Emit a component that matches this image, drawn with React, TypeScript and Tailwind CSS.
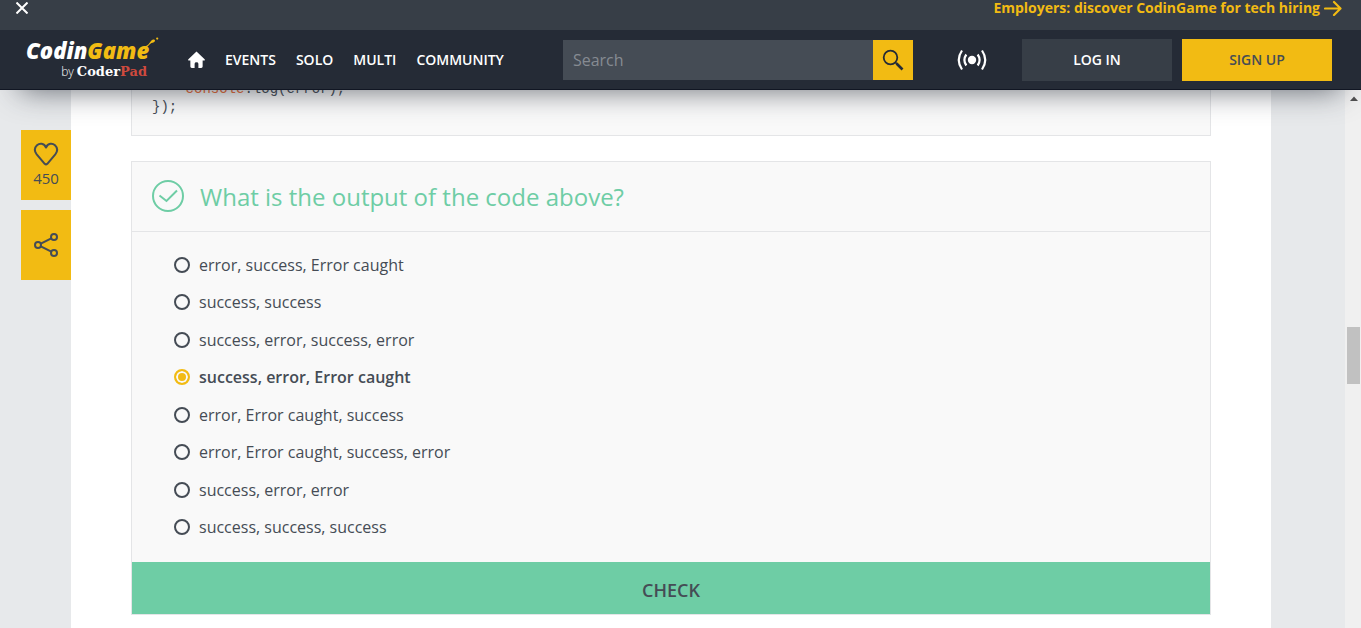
import { useState } from "react";

const NAV_LINKS = ["EVENTS", "SOLO", "MULTI", "COMMUNITY"];

const ANSWERS = [
  "error, success, Error caught",
  "success, success",
  "success, error, success, error",
  "success, error, Error caught",
  "error, Error caught, success",
  "error, Error caught, success, error",
  "success, error, error",
  "success, success, success",
];

function Logo() {
  return (
    <a href="#" className="relative flex w-32 shrink-0 flex-col pt-0.5">
      <span className="text-[22px] leading-[22px] font-extrabold text-white italic">
        Codin<span className="text-[#f2bb13]">Game</span>
      </span>
      <svg className="absolute top-0 left-[119px]" width="14" height="12" viewBox="0 0 14 12" fill="#f2bb13" aria-hidden="true">
        <path d="M0 9.5 C3 8.5 4.5 6 6 4 C7.5 2.3 9.8 2.2 10 3.2 C10.2 5 8 5.6 6.5 6 C4.5 7 3 10 0 11z" />
        <circle cx="12.2" cy="1.6" r="1.1" />
      </svg>
      <span className="flex items-baseline justify-end gap-[3px] pr-[7px] leading-[22px] text-white">
        <span className="text-xs font-light">by</span>
        <span className="font-['DejaVu_Serif',serif] text-[13px] leading-[22px] font-bold">
          Coder<span className="text-[#cf4a3e]">Pad</span>
        </span>
      </span>
    </a>
  );
}

function TopBar() {
  return (
    <div className="flex h-[30px] items-start justify-between bg-[#373e47] pr-[19px] pl-4">
      <button type="button" aria-label="Close" className="flex h-4 items-center text-white">
        <svg width="12" height="12" viewBox="0 0 12 12" stroke="currentColor" strokeWidth="2" aria-hidden="true">
          <path d="M.5 .5l11 11M11.5 .5l-11 11" />
        </svg>
      </button>
      <a href="#" className="flex items-center gap-1 text-sm leading-4 font-bold text-[#f2bb13]">
        Employers: discover CodinGame for tech hiring
        <svg width="18" height="16" viewBox="0 0 18 16" fill="none" stroke="currentColor" strokeWidth="2.200" strokeLinecap="round" strokeLinejoin="round" aria-hidden="true">
          <path d="M1 8.5h15M10 2l6.5 6.5L10 15" />
        </svg>
      </a>
    </div>
  );
}

function Header() {
  return (
    <header className="relative z-10 shadow-[0_20px_30px_-20px_rgba(37,43,54,0.7)]">
      <TopBar />
      <div className="flex h-[60px] items-center border-b border-[#111623] bg-[#252b36] pr-[29px] pl-[26px]">
        <Logo />
        <nav className="ml-[34px] flex shrink-0 items-center gap-5 text-sm font-semibold text-white">
          <a href="#" aria-label="Home">
            <svg width="17" height="18" viewBox="0 0 18 18" fill="currentColor" aria-hidden="true">
              <path d="M9 0 L.4 8.2 Q-.3 9.4 1 9.5 H2.5 V16 Q2.5 17.5 4 17.5 H7 V13 Q7 11.5 9 11.5 Q11 11.5 11 13 V17.5 H14 Q15.500 17.5 15.500 16 V9.500 H17 Q18.300 9.400 17.600 8.200z" />
            </svg>
          </a>
          {NAV_LINKS.map((label) => (
            <a key={label} href="#">
              {label}
            </a>
          ))}
        </nav>
        <form role="search" className="ml-[59px] flex h-10 min-w-0 flex-1" onSubmit={(e) => e.preventDefault()}>
          <input
            type="text"
            aria-label="Search"
            placeholder="Search"
            className="min-w-0 flex-1 bg-[#454c55] px-2.5 text-base text-white outline-none placeholder:text-[#868b92]"
          />
          <button type="submit" aria-label="Submit search" className="flex w-10 items-center justify-center bg-[#f2bb13] text-[#252b36]">
            <svg width="22" height="22" viewBox="0 0 22 22" fill="none" stroke="currentColor" aria-hidden="true">
              <circle cx="8.500" cy="8.500" r="6.800" strokeWidth="1.800" />
              <path d="M13 13.500l2 1" strokeWidth="1.500" />
              <path d="M14.500 14.500l6 6" strokeWidth="2.600" />
            </svg>
          </button>
        </form>
        <a href="#" aria-label="Live" className="mr-[35px] ml-[44px] shrink-0 text-white">
          <svg width="30" height="22" viewBox="0 0 30 22" fill="none" stroke="currentColor" strokeWidth="2.200" aria-hidden="true">
            <circle cx="15" cy="11" r="4.200" fill="currentColor" stroke="none" />
            <path d="M9.300 5.500Q5.500 11 9.300 16.500M20.700 5.500Q24.500 11 20.700 16.500M5 1.500Q-1.500 11 5 20.500M25 1.500Q31.500 11 25 20.500" />
          </svg>
        </a>
        <div className="flex shrink-0 gap-2.5 text-sm font-semibold">
          <button type="button" className="h-[42px] w-[150px] bg-[#373e47] text-white">
            LOG IN
          </button>
          <button type="button" className="h-[42px] w-[150px] bg-[#f2bb13] text-[#454c55]">
            SIGN UP
          </button>
        </div>
      </div>
    </header>
  );
}

function SideActions() {
  return (
    <aside className="flex w-[71px] shrink-0 flex-col gap-2.5 pt-10 pl-[21px] text-[#454c55]">
      <button type="button" aria-label="Like, 450" className="flex h-[70px] flex-col items-center bg-[#f2bb13] pt-3 text-[15px] font-medium">
        <svg width="26" height="24" viewBox="0 0 26 24" fill="none" stroke="currentColor" strokeWidth="2" strokeLinejoin="round" aria-hidden="true">
          <path d="M13 5.500 C11 1 6.500 1 4 3.300 C1.200 6 1.500 9.500 3.700 12.300 L11.700 21.800 Q13 23 14.300 21.800 L22.300 12.300 C24.500 9.500 24.800 6 22 3.300 C19.500 1 15 1 13 5.500z" />
        </svg>
        <span className="mt-0.5 leading-5">450</span>
      </button>
      <button type="button" aria-label="Share" className="flex h-[70px] items-center justify-center bg-[#f2bb13]">
        <svg width="24" height="24" viewBox="0 0 24 24" fill="none" stroke="currentColor" strokeWidth="2" aria-hidden="true">
          <circle cx="4" cy="12" r="3" />
          <circle cx="20" cy="4" r="3" />
          <circle cx="20" cy="20" r="3" />
          <path d="M6.800 10.700l10.500-5.400M6.800 13.300l10.500 5.400" />
        </svg>
      </button>
    </aside>
  );
}

function Quiz() {
  const [selected, setSelected] = useState(3);
  return (
    <form className="mt-[25px] border border-[#e4e5e7] bg-[#f9f9f9]" onSubmit={(e) => e.preventDefault()}>
      <h2 className="flex h-[70px] items-start gap-4 border-b border-[#e4e5e7] px-5 pt-[18px] text-2xl leading-[34px] text-[#6ecda5]">
        <svg width="32" height="32" viewBox="0 0 32 32" fill="none" stroke="currentColor" strokeWidth="2" aria-hidden="true">
          <circle cx="16" cy="16" r="15" />
          <path d="M7.500 15.500l7 5.500L25 10.500" />
        </svg>
        What is the output of the code above?
      </h2>
      <div role="radiogroup" aria-label="Answers" className="grid h-[330px] grid-rows-8 px-[42px] pt-3.5 pb-4 text-base">
        {ANSWERS.map((answer, i) => (
          <label key={answer} className="flex items-center gap-[9px] text-[#454c55] has-checked:font-semibold">
            <input
              type="radio"
              name="answer"
              checked={selected === i}
              onChange={() => setSelected(i)}
              className="size-4 shrink-0 appearance-none rounded-full border-2 border-[#454c55] checked:border-[#f2bb13] checked:bg-[#f2bb13] checked:inset-ring-2 checked:inset-ring-[#f9f9f9]"
            />
            {answer}
          </label>
        ))}
      </div>
      <button type="submit" className="h-[52px] w-full bg-[#6ecda5] pt-1 text-lg font-semibold text-[#454c55]">
        CHECK
      </button>
    </form>
  );
}

function ScrollTrack() {
  return (
    <div className="flex w-4 shrink-0 flex-col bg-[#f0f0f0] pt-1.5 pr-px pl-0.5" aria-hidden="true">
      <svg className="self-center" width="8" height="5" viewBox="0 0 8 5" fill="#505050">
        <path d="M4 .5L8 5H0z" />
      </svg>
      <div className="mt-[226px] h-[57px] bg-[#c1c1c1]" />
    </div>
  );
}

export default function App() {
  return (
    <div className="flex h-screen flex-col overflow-hidden bg-[#e7e9eb] font-['Open_Sans',sans-serif]">
      <Header />
      <div className="flex min-h-0 flex-1">
        <SideActions />
        <main className="min-w-0 flex-1 bg-white px-[60px]">
          <pre className="-mt-3 border border-[#e4e5e7] bg-[#f9f9f9] px-5 pt-px pb-[19px] font-['Liberation_Mono',monospace] text-sm leading-[18px] text-[#454c55]">
            {"    "}
            <span className="text-[#ee6b35]">console</span>
            {".log(error);\n});"}
          </pre>
          <Quiz />
        </main>
        <div className="w-[74px] shrink-0" />
        <ScrollTrack />
      </div>
    </div>
  );
}
